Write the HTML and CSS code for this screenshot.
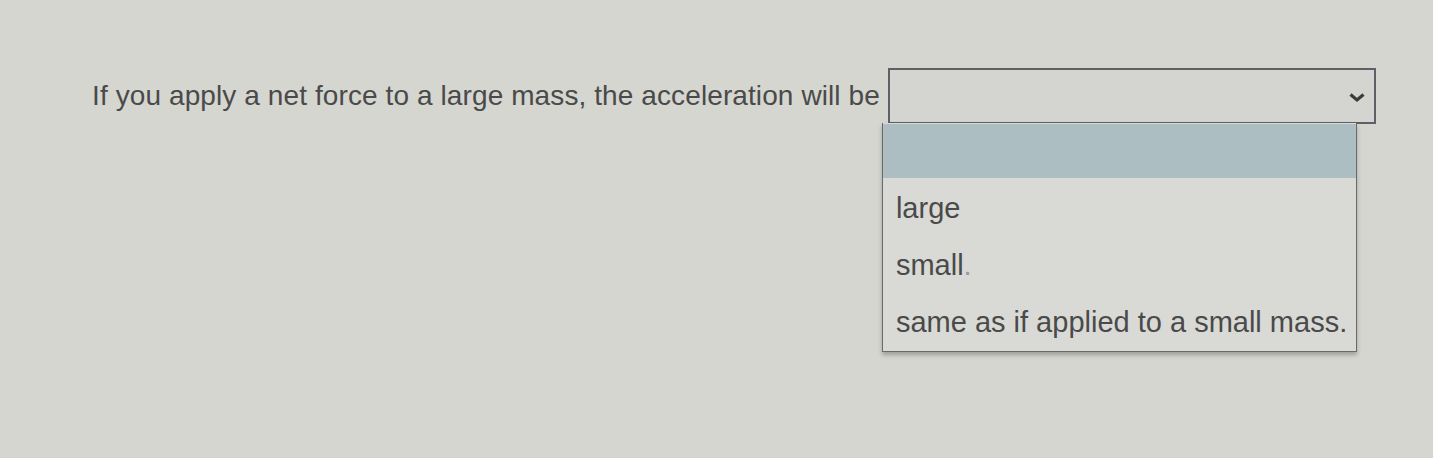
FILE: index.html
```html
<html lang="en">
<head>
<meta charset="UTF-8" />
<meta name="viewport" content="width=device-width, initial-scale=1.0" />
<title>Question</title>
<link rel="stylesheet" href="styles.css">
</head>
<body>

<div class="question">
  <div class="prompt">If you apply a net force to a large mass, the acceleration will be</div>

  <!-- Выпадающий список с ответами -->
  <div class="answer">
    <div class="select">
      <svg class="chevron" width="18" height="11" viewBox="0 0 18 11">
        <path d="M2.5 2.5 L9 8 L15.5 2.5" fill="none" stroke="#3c3c3c" stroke-width="3.2" />
      </svg>
    </div>
    <div class="options">
      <div class="option selected"></div>
      <div class="option">large</div>
      <div class="option">small<span class="mark">.</span></div>
      <div class="option">same as if applied to a small mass.</div>
    </div>
  </div>
</div>

</body>
</html>
```

FILE: styles.css
```css
body {
  font-family: "Liberation Sans", Arial, sans-serif;
  background-color: #d5d6d0;
  color: #4a4a4a;
  margin: 0;
  padding: 0;
}
.question {
  display: flex;
  align-items: flex-start;
  padding: 68px 0 0 92px;
}
.prompt {
  font-size: 28px;
  line-height: 56px;
  letter-spacing: 0.1px;
  margin-right: 8px;
}
.answer {
  display: flex;
  flex-direction: column;
}
.select {
  width: 476px;
  height: 52px;
  border: 2px solid #5f6066;
  background-color: #d4d5d1;
  display: flex;
  align-items: center;
  justify-content: flex-end;
  padding-right: 8px;
  box-sizing: content-box;
}
.chevron {
  margin-top: 2px;
}
.options {
  width: 473px;
  margin-left: -6px;
  margin-top: -1px;
  border: 1px solid #6a6a6a;
  border-top: none;
  background-color: #d9dad6;
  box-shadow: 0 3px 4px rgba(60, 60, 60, 0.35);
}
.option {
  height: 57px;
  line-height: 57px;
  padding-left: 13px;
  font-size: 29px;
  color: #4a4a4a;
}
.option.selected {
  height: 54px;
  margin: 1px 0 2px 0;
  background-color: #adbec3;
}
.mark {
  color: #9a9a9a;
}
```
